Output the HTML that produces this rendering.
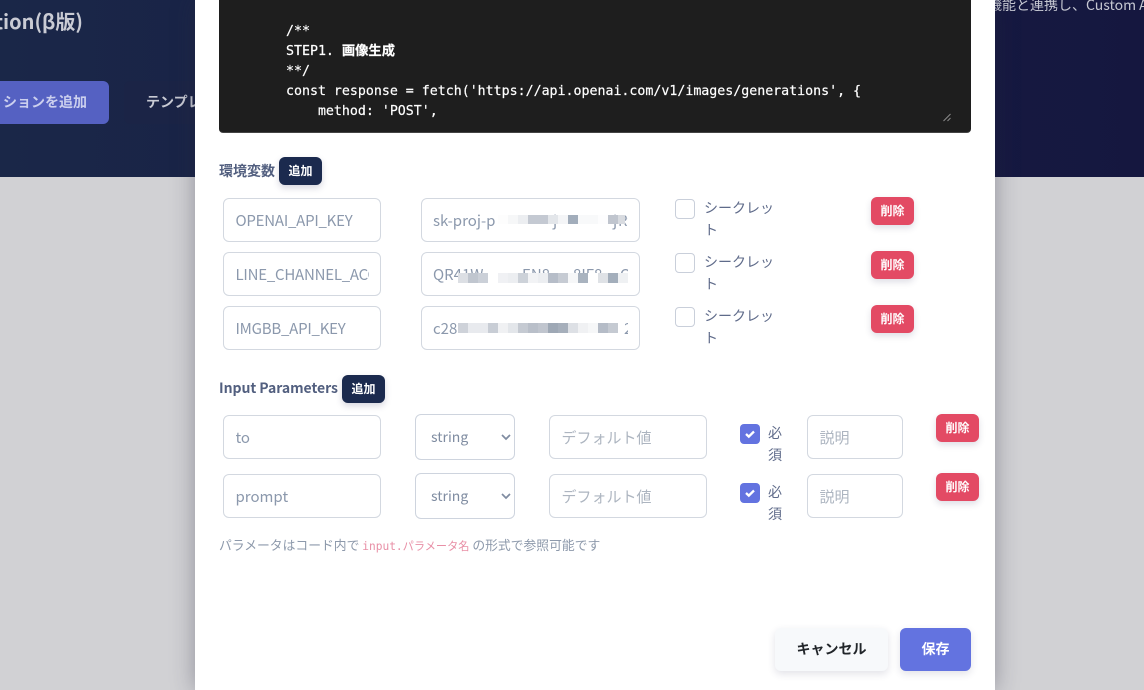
<!DOCTYPE html>
<html lang="ja">
<head>
<meta charset="utf-8">
<title>Custom Action</title>
<style>
html,body{margin:0;padding:0;width:1144px;height:690px;overflow:hidden;background:#d1d1d4;}
body{position:relative;font-family:"Noto Sans CJK JP","Liberation Sans",sans-serif;}
.a{position:absolute;box-sizing:border-box;white-space:nowrap;}
#hdr{left:0;top:0;width:1144px;height:177px;background:linear-gradient(90deg,#1a2748 0%,#171c44 60%,#15173f 100%);}
#modal{left:195px;top:0;width:800px;height:690px;background:#fff;box-shadow:0 0 22px rgba(40,40,60,.38);}
#code{left:219px;top:-20px;width:752px;height:153px;background:#1e1e1e;border-radius:4px;border-bottom:1px solid #444;}
.cl{position:absolute;left:286px;font:13.28px/20px "DejaVu Sans Mono","Noto Sans CJK JP",monospace;color:#fff;white-space:pre;font-weight:400;-webkit-text-stroke:.2px #fff;}
.inp{position:absolute;box-sizing:border-box;height:44px;background:#fff;border:1px solid #d3d8e0;border-radius:6px;color:#8b98ac;font-size:15px;line-height:44px;padding:0 11.5px;white-space:nowrap;}
.inp i{display:block;position:relative;font-style:normal;overflow:hidden;height:42px;}
.inp i span{position:absolute;top:0;}
.up{letter-spacing:-.22px;}
.ph{color:#adb5c0;}
.sel{position:absolute;box-sizing:border-box;left:415px;width:100px;height:46px;background:#fff;border:1px solid #ced4de;border-radius:6px;color:#7f8ca1;font-size:14px;line-height:44px;padding-left:15px;}
.sel svg{position:absolute;left:84px;top:18px;}
.cb{position:absolute;box-sizing:border-box;width:20px;height:20px;border-radius:4px;border:1px solid #c9cfda;background:#fff;}
.cb.on{background:#6373e0;border:0;}
.cb.on svg{position:absolute;left:4px;top:5px;}
.lbl{position:absolute;color:#5f6b8a;font-size:14px;line-height:22px;white-space:normal;}
.del{position:absolute;box-sizing:border-box;width:43px;height:28px;background:#e34a64;border-radius:6px;color:#fff;font-size:12px;font-weight:700;line-height:27px;text-align:center;box-shadow:0 3px 7px rgba(50,50,93,.16);}
.add{position:absolute;box-sizing:border-box;width:43px;height:28px;background:#1b2a4e;border-radius:6px;color:#fff;font-size:12px;font-weight:700;line-height:27px;text-align:center;box-shadow:0 3px 7px rgba(50,50,93,.2);}
.h{position:absolute;color:#525f7f;font-size:14px;font-weight:700;line-height:20px;white-space:nowrap;}
</style>
</head>
<body>
<div class="a" id="hdr"></div>
<div class="a" style="left:-67px;top:6px;width:150px;text-align:right;font-size:20px;font-weight:700;line-height:30px;color:#c9cbd4;">Action(β版)</div>
<div class="a" style="left:-60px;top:81px;width:169px;height:43px;background:#5561c2;border-radius:6px;color:#ccd0ee;font-size:14px;font-weight:700;line-height:42px;text-align:right;padding-right:22px;">ションを追加</div>
<div class="a" style="left:124px;top:81px;width:120px;height:43px;background:#1b2446;border-radius:6px;color:#c9cbd4;font-size:14px;font-weight:700;line-height:42px;padding-left:22px;">テンプレート</div>
<div class="a" style="left:988px;top:-5px;font-size:14px;line-height:20px;color:#c6c8d2;">機能と連携し、Custom Action</div>

<div class="a" id="modal"></div>
<div class="a" id="code"></div>
<div class="cl" style="top:22px;">/**</div>
<div class="cl" style="top:42px;">STEP1. <b>画像生成</b></div>
<div class="cl" style="top:62px;">**/</div>
<div class="cl" style="top:82px;">const response = fetch('https://api.openai.com/v1/images/generations', {</div>
<div class="cl" style="top:102px;">    method: 'POST',</div>
<svg class="a" style="left:942px;top:112px;" width="10" height="10" viewBox="0 0 10 10"><path d="M1.5 9 L8.5 2 M5.5 9 L8.5 6" stroke="#8a8a8a" stroke-width="1" fill="none"/></svg>

<div class="h" style="left:219px;top:161px;">環境変数</div>
<div class="add" style="left:279px;top:157px;">追加</div>

<div class="inp up" style="left:223px;top:198px;width:158px;"><i>OPENAI_API_KEY</i></div>
<div class="inp up" style="left:223px;top:252px;width:158px;"><i>LINE_CHANNEL_ACCESS_TOKEN</i></div>
<div class="inp up" style="left:223px;top:306px;width:158px;"><i>IMGBB_API_KEY</i></div>
<div class="inp" style="left:421px;top:198px;width:219px;padding-left:11px;"><i>sk-proj-p<span style="left:120px;">j</span><span style="left:180px;">j</span><span style="left:185px;">RtUa</span></i></div>
<div class="inp" style="left:421px;top:252px;width:219px;padding-left:11px;"><i>QR41W<span style="left:89px;">EN8</span><span style="left:140px;">8IF8</span><span style="left:187px;">Qw</span></i></div>
<div class="inp" style="left:421px;top:306px;width:219px;padding-left:11px;"><i>c28<span style="left:191px;">2</span></i></div>

<svg class="a" style="left:0;top:0;pointer-events:none;" width="1144" height="690" shape-rendering="crispEdges">
<g>
<rect x="498" y="215" width="10" height="9" fill="#fdfdfd"/><rect x="508" y="215" width="10" height="9" fill="#f6f7f8"/><rect x="518" y="215" width="10" height="9" fill="#eceef1"/><rect x="528" y="215" width="20" height="9" fill="#c4c9d2"/><rect x="548" y="215" width="10" height="9" fill="#e3e6ea"/><rect x="558" y="215" width="10" height="9" fill="#f4f5f7"/><rect x="568" y="215" width="10" height="9" fill="#a2adbb"/><rect x="578" y="215" width="20" height="9" fill="#f8f9fa"/><rect x="598" y="215" width="10" height="9" fill="#fdfdfe"/><rect x="608" y="215" width="10" height="9" fill="#c0c5ce"/><rect x="618" y="215" width="7" height="9" fill="#d8dbe0"/>
</g>
<g>
<rect x="458" y="273" width="10" height="10" fill="#dcdfe4"/><rect x="468" y="273" width="10" height="10" fill="#c0c6cf"/><rect x="478" y="273" width="10" height="10" fill="#cbd0d8"/><rect x="488" y="273" width="10" height="10" fill="#fff"/><rect x="498" y="273" width="10" height="10" fill="#f0f1f4"/><rect x="508" y="273" width="10" height="10" fill="#eceef1"/><rect x="518" y="273" width="10" height="10" fill="#cdd2d9"/><rect x="528" y="273" width="10" height="10" fill="#f2f3f5"/><rect x="538" y="273" width="10" height="10" fill="#eceef1"/><rect x="548" y="273" width="10" height="10" fill="#b6bdc8"/><rect x="558" y="273" width="10" height="10" fill="#c6cbd3"/><rect x="568" y="273" width="10" height="10" fill="#f6f7f8"/><rect x="578" y="273" width="10" height="10" fill="#a9b3bf"/><rect x="588" y="273" width="10" height="10" fill="#fff"/><rect x="598" y="273" width="10" height="10" fill="#dfe2e6"/><rect x="608" y="273" width="10" height="10" fill="#a3aebb"/><rect x="618" y="273" width="10" height="10" fill="#eff1f3"/>
</g>
<g>
<rect x="458" y="323" width="10" height="10" fill="#ced2d9"/><rect x="468" y="323" width="20" height="10" fill="#e8eaee"/><rect x="488" y="323" width="10" height="10" fill="#c8cdd5"/><rect x="498" y="323" width="10" height="10" fill="#f0f1f3"/><rect x="508" y="323" width="10" height="10" fill="#e3e6ea"/><rect x="518" y="323" width="10" height="10" fill="#c5cad2"/><rect x="528" y="323" width="10" height="10" fill="#b9bfc9"/><rect x="538" y="323" width="10" height="10" fill="#c0c5ce"/><rect x="548" y="323" width="10" height="10" fill="#9ea8b5"/><rect x="558" y="323" width="10" height="10" fill="#a6afbb"/><rect x="568" y="323" width="10" height="10" fill="#dde0e5"/><rect x="578" y="323" width="10" height="10" fill="#f0f1f3"/><rect x="588" y="323" width="10" height="10" fill="#f6f7f8"/><rect x="598" y="323" width="10" height="10" fill="#b5bcc7"/><rect x="608" y="323" width="10" height="10" fill="#c5cad2"/><rect x="618" y="323" width="7" height="10" fill="#fff"/>
</g>
</svg>

<div class="cb" style="left:675px;top:199px;"></div>
<div class="cb" style="left:675px;top:253px;"></div>
<div class="cb" style="left:675px;top:307px;"></div>
<div class="lbl" style="left:704px;top:197px;width:70px;">シークレット</div>
<div class="lbl" style="left:704px;top:251px;width:70px;">シークレット</div>
<div class="lbl" style="left:704px;top:305px;width:70px;">シークレット</div>
<div class="del" style="left:871px;top:197px;">削除</div>
<div class="del" style="left:871px;top:251px;">削除</div>
<div class="del" style="left:871px;top:305px;">削除</div>

<div class="h" style="left:219px;top:378px;letter-spacing:-.05px;">Input Parameters</div>
<div class="add" style="left:342px;top:375px;">追加</div>

<div class="inp" style="left:223px;top:415px;width:158px;"><i>to</i></div>
<div class="inp" style="left:223px;top:474px;width:158px;"><i>prompt</i></div>
<div class="sel" style="top:414px;">string<svg width="12" height="8" viewBox="0 0 12 8"><path d="M2 2 L6 6 L10 2" stroke="#7f8ca1" stroke-width="1.7" fill="none"/></svg></div>
<div class="sel" style="top:473px;">string<svg width="12" height="8" viewBox="0 0 12 8"><path d="M2 2 L6 6 L10 2" stroke="#7f8ca1" stroke-width="1.7" fill="none"/></svg></div>
<div class="inp ph" style="left:549px;top:415px;width:158px;"><i>デフォルト値</i></div>
<div class="inp ph" style="left:549px;top:474px;width:158px;"><i>デフォルト値</i></div>
<div class="cb on" style="left:740px;top:424px;"><svg width="12" height="10" viewBox="0 0 12 10"><path d="M2 5 L4.8 7.6 L10 2.5" stroke="#fff" stroke-width="2.3" fill="none"/></svg></div>
<div class="cb on" style="left:740px;top:483px;"><svg width="12" height="10" viewBox="0 0 12 10"><path d="M2 5 L4.8 7.6 L10 2.5" stroke="#fff" stroke-width="2.3" fill="none"/></svg></div>
<div class="lbl" style="left:768px;top:422px;width:15px;">必須</div>
<div class="lbl" style="left:768px;top:481px;width:15px;">必須</div>
<div class="inp ph" style="left:807px;top:415px;width:96px;"><i>説明</i></div>
<div class="inp ph" style="left:807px;top:474px;width:96px;"><i>説明</i></div>
<div class="del" style="left:936px;top:414px;">削除</div>
<div class="del" style="left:936px;top:473px;">削除</div>

<div class="a" style="left:219px;top:535px;font-size:12.8px;line-height:20px;color:#8d99ab;">パラメータはコード内で <span style="font-family:'DejaVu Sans Mono','Noto Sans CJK JP',monospace;font-size:11.2px;color:#e88fa6;">input.パラメータ名</span> の形式で参照可能です</div>

<div class="a" style="left:775px;top:628px;width:113px;height:43px;background:#f7f9fb;border-radius:6px;color:#212529;font-size:14px;font-weight:700;line-height:42px;text-align:center;box-shadow:0 3px 8px rgba(50,50,93,.14);">キャンセル</div>
<div class="a" style="left:900px;top:628px;width:71px;height:43px;background:#6373e0;border-radius:6px;color:#fff;font-size:14px;font-weight:700;line-height:42px;text-align:center;box-shadow:0 3px 8px rgba(50,50,93,.14);">保存</div>
</body>
</html>
